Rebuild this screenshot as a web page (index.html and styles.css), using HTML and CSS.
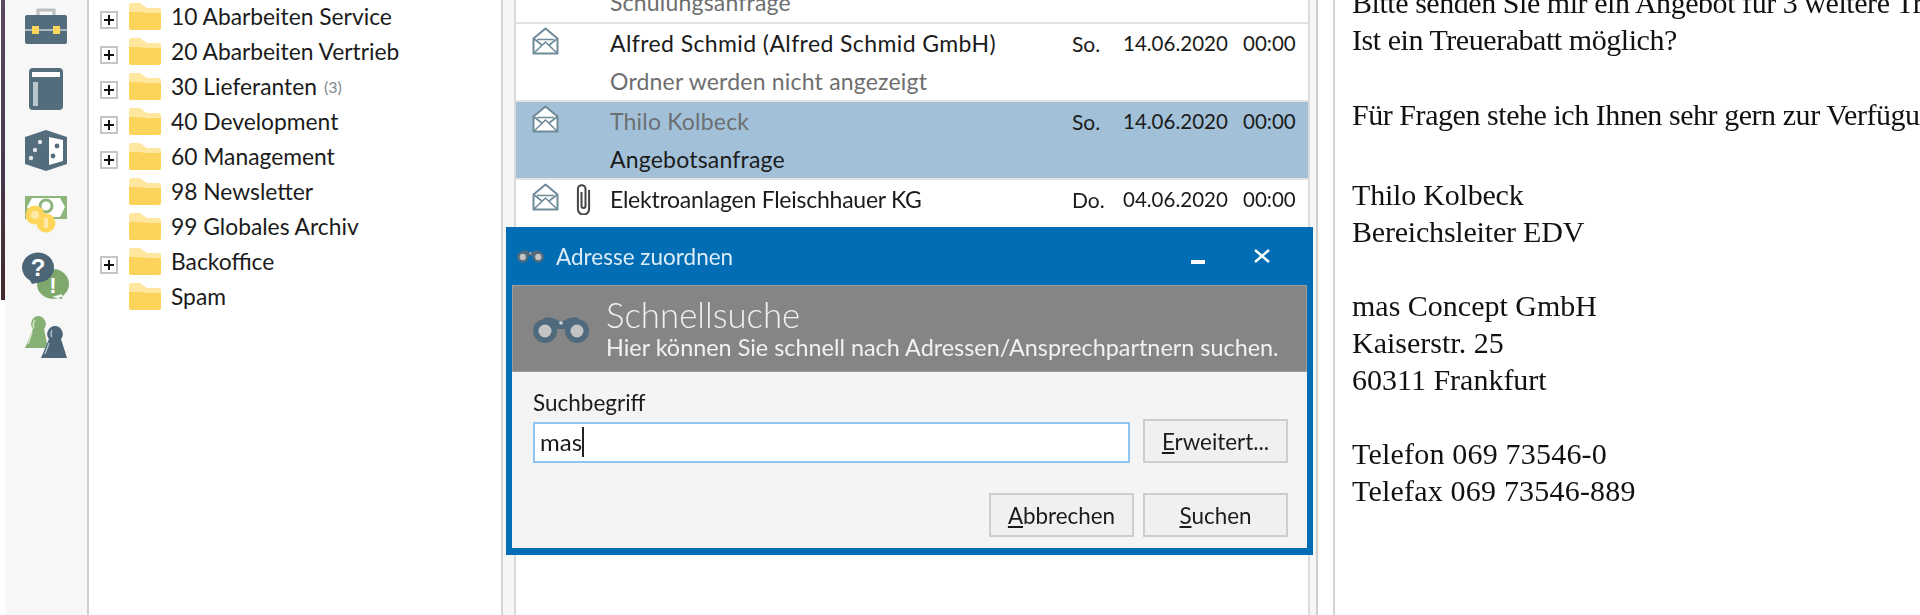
FILE: index.html
```html
<!DOCTYPE html>
<html lang="de">
<head>
<meta charset="utf-8">
<title>Adresse zuordnen</title>
<link rel="stylesheet" href="styles.css">
</head>
<body>
<svg class="defs" width="0" height="0" aria-hidden="true">
  <symbol id="folder" viewBox="0 0 32 27">
    <path class="folder-back" d="M0 2.500Q0 0 2.500 0H11L18 5H30Q32 5 32 7V25Q32 27 30 27H2Q0 27 0 25Z"/>
    <path class="folder-front" d="M0 9H10L17 10H32V25Q32 27 30 27H2Q0 27 0 25Z"/>
  </symbol>
  <symbol id="plus" viewBox="0 0 18 18">
    <rect x="1" y="1" width="16" height="16" fill="#fff" stroke="#c6c6c6" stroke-width="2"/>
    <path d="M4 9H14M9 4V14" stroke="#111" stroke-width="2"/>
  </symbol>
  <symbol id="mail" viewBox="0 0 27 28">
    <path d="M1.500 11.500L13.500 1.500L25.500 11.500V26.500H1.500Z" fill="#fff" stroke="#6f8a99" stroke-width="2" stroke-linejoin="round"/>
    <path d="M5 12.500H22M1.500 11.500L10.500 18.500M25.500 11.500L16.500 18.500M2 26L13.500 15L25 26" fill="none" stroke="#6f8a99" stroke-width="1.600"/>
  </symbol>
  <symbol id="clip" viewBox="0 0 15 32">
    <path d="M5.500 9V23a2 2 0 0 0 4 0V6a3.800 3.800 0 0 0-7.600 0V26a5.600 5.600 0 0 0 11.200 0V7" fill="none" stroke="#454545" stroke-width="2"/>
  </symbol>
  <symbol id="binoculars" viewBox="0 0 60 30">
    <path d="M12 3Q18 1 24 4L30 7L36 4Q42 1 48 3L38 14H22Z" fill="#4f6a7d"/>
    <circle cx="14" cy="16" r="12" fill="#4f6a7d"/>
    <circle cx="46" cy="16" r="12" fill="#4f6a7d"/>
    <circle cx="14" cy="16" r="6.500" fill="#c4c4c4"/>
    <circle cx="46" cy="16" r="6.500" fill="#c4c4c4"/>
    <circle cx="30" cy="8" r="1.800" fill="#c8d4da"/>
  </symbol>
</svg>

<div class="app">
  <div class="strip"></div>
  <nav class="rail">
    <svg class="rail-icon" viewBox="0 0 42 36" width="42" height="36">
      <path d="M13 8V2H29V8" fill="none" stroke="#b9bfc2" stroke-width="3"/>
      <rect y="7" width="42" height="29" rx="2" fill="#536d7c"/>
      <path d="M0 22H42" stroke="#c6d0d5" stroke-width="1.500"/>
      <rect x="7" y="18" width="7" height="8" fill="#ffd65c"/>
      <rect x="28" y="18" width="7" height="8" fill="#ffd65c"/>
    </svg>
    <svg class="rail-icon book" viewBox="0 0 34 42" width="34" height="42">
      <rect width="34" height="42" rx="4" fill="#536d7c"/>
      <rect x="3" y="4" width="28" height="5" fill="#fff"/>
      <rect x="4" y="14" width="5" height="24" fill="#b8c5cc"/>
    </svg>
    <svg class="rail-icon dice" viewBox="0 0 42 41" width="42" height="41">
      <path d="M0 7L21 0L42 7V34L21 41L0 34Z" fill="#536d7c"/>
      <path d="M24 7L38 10V31L24 35Z" fill="#fff"/>
      <circle cx="15" cy="12" r="2.200" fill="#dfe5e8"/>
      <circle cx="10" cy="20" r="2.200" fill="#dfe5e8"/>
      <circle cx="6" cy="28" r="2.200" fill="#dfe5e8"/>
      <circle cx="32" cy="16" r="2.400" fill="#536d7c"/>
      <circle cx="28" cy="26" r="2.400" fill="#536d7c"/>
    </svg>
    <svg class="rail-icon money" viewBox="0 0 42 38" width="42" height="38">
      <rect y="1" width="42" height="23" fill="#8db57c"/>
      <path d="M7 3H35L40 12L35 22H7L2 12Z" fill="#fff"/>
      <circle cx="21" cy="11" r="6" fill="none" stroke="#8db57c" stroke-width="3"/>
      <circle cx="10" cy="20" r="9.500" fill="#ffd65c"/>
      <circle cx="10" cy="20" r="4" fill="#ffe9a8"/>
      <circle cx="21" cy="28" r="9.500" fill="#ffd65c"/>
      <rect x="19" y="23" width="4" height="10" fill="#ffe9a8"/>
    </svg>
    <svg class="rail-icon help" viewBox="0 0 48 48" width="48" height="48">
      <path d="M47 32a16 15 0 1 1-16-15 16 15 0 0 1 16 15ZM30 45L40 47L40 42Z" fill="#7fa86d"/>
      <path d="M32 15.500a16 15 0 1 0-24 13L10 32L17 30.500a16 15 0 0 0 15-15Z" fill="#4b6576"/>
      <text class="help-q" x="16" y="24">?</text>
      <text class="help-x" x="31" y="41">!</text>
    </svg>
    <svg class="rail-icon people" viewBox="0 0 42 42" width="42" height="42">
      <path d="M13 0a8 8 0 0 1 6 13L23 32H0L8 13A8 8 0 0 1 13 0Z" fill="#87b074"/>
      <path d="M10 4Q7 8 9 12M7 16L3 28" fill="none" stroke="#d5e4cc" stroke-width="1.500"/>
      <path d="M30 10a8 8 0 0 1 6 13L42 42H16L24 23A8 8 0 0 1 30 10Z" fill="#4b6576"/>
      <path d="M27 14Q25 18 27 21M24 27L20 38" fill="none" stroke="#a9bac4" stroke-width="1.500"/>
    </svg>
  </nav>

  <ul class="tree">
    <li class="tree-row"><svg class="plus"><use href="#plus"/></svg><svg class="folder"><use href="#folder"/></svg><span>10 Abarbeiten Service</span></li>
    <li class="tree-row"><svg class="plus"><use href="#plus"/></svg><svg class="folder"><use href="#folder"/></svg><span>20 Abarbeiten Vertrieb</span></li>
    <li class="tree-row"><svg class="plus"><use href="#plus"/></svg><svg class="folder"><use href="#folder"/></svg><span>30 Lieferanten</span><span class="count">(3)</span></li>
    <li class="tree-row"><svg class="plus"><use href="#plus"/></svg><svg class="folder"><use href="#folder"/></svg><span>40 Development</span></li>
    <li class="tree-row"><svg class="plus"><use href="#plus"/></svg><svg class="folder"><use href="#folder"/></svg><span>60 Management</span></li>
    <li class="tree-row leaf"><svg class="folder"><use href="#folder"/></svg><span>98 Newsletter</span></li>
    <li class="tree-row leaf"><svg class="folder"><use href="#folder"/></svg><span>99 Globales Archiv</span></li>
    <li class="tree-row gray"><svg class="plus"><use href="#plus"/></svg><svg class="folder"><use href="#folder"/></svg><span>Backoffice</span></li>
    <li class="tree-row leaf"><svg class="folder"><use href="#folder"/></svg><span>Spam</span></li>
  </ul>

  <div class="gutter"></div>

  <section class="list">
    <div class="clipped"><span class="muted">Schulungsanfrage</span></div>
    <article class="mail">
      <svg class="env"><use href="#mail"/></svg>
      <span class="sender wide">Alfred Schmid (Alfred Schmid GmbH)</span>
      <span class="day">So.</span><span class="date">14.06.2020</span><span class="time">00:00</span>
      <span class="subject muted">Ordner werden nicht angezeigt</span>
    </article>
    <article class="mail selected">
      <svg class="env"><use href="#mail"/></svg>
      <span class="sender read">Thilo Kolbeck</span>
      <span class="day">So.</span><span class="date">14.06.2020</span><span class="time">00:00</span>
      <span class="subject">Angebotsanfrage</span>
    </article>
    <article class="mail last">
      <svg class="env"><use href="#mail"/></svg>
      <svg class="clip"><use href="#clip"/></svg>
      <span class="sender tight">Elektroanlagen Fleischhauer KG</span>
      <span class="day">Do.</span><span class="date">04.06.2020</span><span class="time">00:00</span>
    </article>
  </section>

  <div class="scroll"></div>

  <main class="reading">
    <p class="p-first">Bitte senden Sie mir ein Angebot für 3 weitere Trainingsplätze.<br>Ist ein Treuerabatt möglich?</p>
    <p class="p-thanks">Für Fragen stehe ich Ihnen sehr gern zur Verfügung.</p>
    <p class="p-sign">Thilo Kolbeck<br>Bereichsleiter EDV</p>
    <p>mas Concept GmbH<br>Kaiserstr. 25<br>60311 Frankfurt</p>
    <p class="p-phone">Telefon 069 73546-0<br>Telefax 069 73546-889</p>
  </main>

  <div class="dialog">
    <header class="titlebar">
      <svg class="title-icon"><use href="#binoculars"/></svg>
      <span class="title-text">Adresse zuordnen</span>
      <span class="minimize"></span>
      <svg class="close" viewBox="0 0 16 14" width="16" height="14"><path d="M1 1L15 13M15 1L1 13" stroke="#fff" stroke-width="2.400"/></svg>
    </header>
    <div class="banner">
      <svg class="banner-icon"><use href="#binoculars"/></svg>
      <div class="banner-text">
        <div class="banner-title">Schnellsuche</div>
        <div class="banner-sub">Hier können Sie schnell nach Adressen/Ansprechpartnern suchen.</div>
      </div>
    </div>
    <div class="form">
      <label class="field-label">Suchbegriff</label>
      <div class="field-row">
        <div class="input"><span class="caret">mas</span></div>
        <button class="btn" type="button"><u>E</u>rweitert...</button>
      </div>
      <div class="actions">
        <button class="btn" type="button"><u>A</u>bbrechen</button>
        <button class="btn" type="button"><u>S</u>uchen</button>
      </div>
    </div>
  </div>
</div>
</body>
</html>
```

FILE: styles.css
```css
* { box-sizing: border-box; }
html, body { margin: 0; padding: 0; background: #fff; }
.defs { display: block; height: 0; }
.app {
  position: relative;
  display: flex;
  width: 1920px;
  height: 615px;
  overflow: hidden;
  font-family: Lato, "Open Sans", sans-serif;
  font-size: 23px;
  color: #1b1b1b;
  filter: blur(.45px);
}
.strip {
  flex: none;
  width: 5px;
  height: 300px;
  border-left: 1px solid #fff;
  background: linear-gradient(#5b4a63, #46384a 60%, #432a2a);
}
.rail {
  flex: none;
  width: 84px;
  display: flex;
  flex-direction: column;
  align-items: center;
  background: #f7f7f7;
  border-right: 2px solid #cfcfcf;
  padding: 8px 0 0;
}
.rail-icon { display: block; flex: none; }
.book { margin-top: 24px; }
.dice { margin-top: 20px; }
.money { margin-top: 24px; }
.help { margin-top: 19px; }
.people { margin-top: 16px; }
.help-q { font: 700 24px "Liberation Sans", sans-serif; fill: #fff; text-anchor: middle; }
.help-x { font: 700 22px "Liberation Sans", sans-serif; fill: #fff; text-anchor: middle; }

.tree {
  flex: none;
  width: 414px;
  margin: 0;
  padding: 0 0 0 11px;
  list-style: none;
  background: #fff;
  border-right: 2px solid #d4d4d4;
  font-size: 22.800px;
}
.tree-row {
  display: flex;
  align-items: center;
  height: 35px;
  white-space: nowrap;
}
.tree-row span { margin-bottom: 3px; }
.plus { flex: none; width: 18px; height: 18px; margin: 4px 11px 0 0; }
.folder { flex: none; width: 32px; height: 27px; margin: 0 10px 2px 0; }
.leaf .folder { margin-left: 29px; }
.folder-back { fill: #ffe7a0; }
.folder-front { fill: #fdd45b; }
.gray .folder-back { fill: #dedede; }
.gray .folder-front { fill: #c3c3c3; }
.tree-row .count { margin-left: 7px; font-size: 16px; color: #7d8a90; }

.gutter {
  flex: none;
  width: 13px;
  background: #f6f6f6;
  border-right: 2px solid #dadada;
}
.list { flex: none; width: 792px; background: #fff; }
.clipped {
  display: flex;
  align-items: flex-end;
  height: 24px;
  padding: 0 0 6px 94px;
  overflow: hidden;
  border-bottom: 2px solid #e2e2e2;
  white-space: nowrap;
  letter-spacing: .2px;
}
.mail {
  display: grid;
  grid-template-columns: 44px 34px 462px 51px 120px auto;
  grid-template-rows: 38px 38px;
  align-items: center;
  height: 78px;
  padding-left: 16px;
  border-bottom: 2px solid #e2e2e2;
  white-space: nowrap;
}
.mail.last { border-bottom: 0; }
.selected { background: #a2c1d8; }
.env { grid-column: 1; grid-row: 1; width: 27px; height: 28px; margin-top: -4px; }
.clip { grid-column: 2; grid-row: 1; width: 15px; height: 32px; }
.sender { grid-column: 3; grid-row: 1; letter-spacing: .2px; }
.wide { letter-spacing: .4px; }
.tight { letter-spacing: -.25px; }
.read { color: #6b6f72; }
.day { grid-column: 4; grid-row: 1; font-size: 21px; }
.date { grid-column: 5; grid-row: 1; font-size: 20.500px; }
.time { grid-column: 6; grid-row: 1; font-size: 20.500px; }
.subject { grid-column: 3 / 7; grid-row: 2; letter-spacing: .2px; }
.muted { color: #6e6e6e; }

.scroll {
  flex: none;
  width: 27px;
  background: #f6f6f6;
  border-left: 2px solid #dcdcdc;
  border-right: 2px solid #d4d4d4;
  box-shadow: inset -15px 0 0 #fff, inset -17px 0 0 #cfcfcf;
}
.reading {
  flex: 1;
  min-width: 0;
  padding: 0 0 0 17px;
  overflow: hidden;
  font-family: "Liberation Serif", "Times New Roman", serif;
  font-size: 30px;
  line-height: 37px;
  color: #111;
  white-space: nowrap;
}
.reading p { margin: 0 0 37px; }
.reading .p-first { margin: -16px 0 38px; letter-spacing: -.45px; }
.reading .p-thanks { margin-bottom: 43px; letter-spacing: -.45px; }
.reading .p-sign { letter-spacing: -.2px; }
.reading .p-phone { letter-spacing: .2px; }

.dialog {
  position: absolute;
  left: 506px;
  top: 227px;
  width: 807px;
  height: 328px;
  display: flex;
  flex-direction: column;
  padding: 0 6px 7px 6px;
  background: #006db4;
}
.titlebar {
  flex: none;
  display: flex;
  align-items: center;
  height: 58px;
  padding: 0 37px 0 4px;
  color: #dcecf7;
  font-size: 22.500px;
}
.title-icon { width: 29px; height: 15px; margin-right: 11px; }
.minimize { width: 14px; height: 4px; margin: 12px 49px 0 auto; background: #fff; }
.close { margin-top: 0; }
.banner {
  flex: none;
  display: flex;
  align-items: center;
  height: 87px;
  padding: 0 0 0 18px;
  background: #858585;
  color: #f1f1f1;
  border: 1px solid #9f9f9f;
}
.banner-icon { width: 60px; height: 30px; margin: 2px 15px 0 0; }
.banner-title { font-size: 34.800px; line-height: 37px; font-weight: 300; }
.banner-sub { font-size: 23.400px; line-height: 28px; white-space: nowrap; }
.form {
  flex: 1;
  display: flex;
  flex-direction: column;
  padding: 18px 19px 0 21px;
  background: #f4f4f4;
}
.field-label { line-height: 26px; font-size: 22.500px; }
.field-row { display: flex; align-items: flex-end; gap: 13px; margin-top: 3px; }
.input {
  flex: 1;
  height: 41px;
  padding-left: 5px;
  background: #fff;
  border: 2px solid #8fc5f0;
  line-height: 36px;
  font-size: 24px;
}
.caret { display: inline-block; height: 30px; line-height: 30px; border-right: 2px solid #222; }
.btn {
  width: 145px;
  height: 44px;
  padding: 0;
  background: #f0f0f0;
  border: 2px solid #cdcdcd;
  font: inherit;
  font-size: 22.400px;
  color: #1b1b1b;
}
.actions { display: flex; justify-content: flex-end; gap: 9px; margin-top: 30px; }
```
